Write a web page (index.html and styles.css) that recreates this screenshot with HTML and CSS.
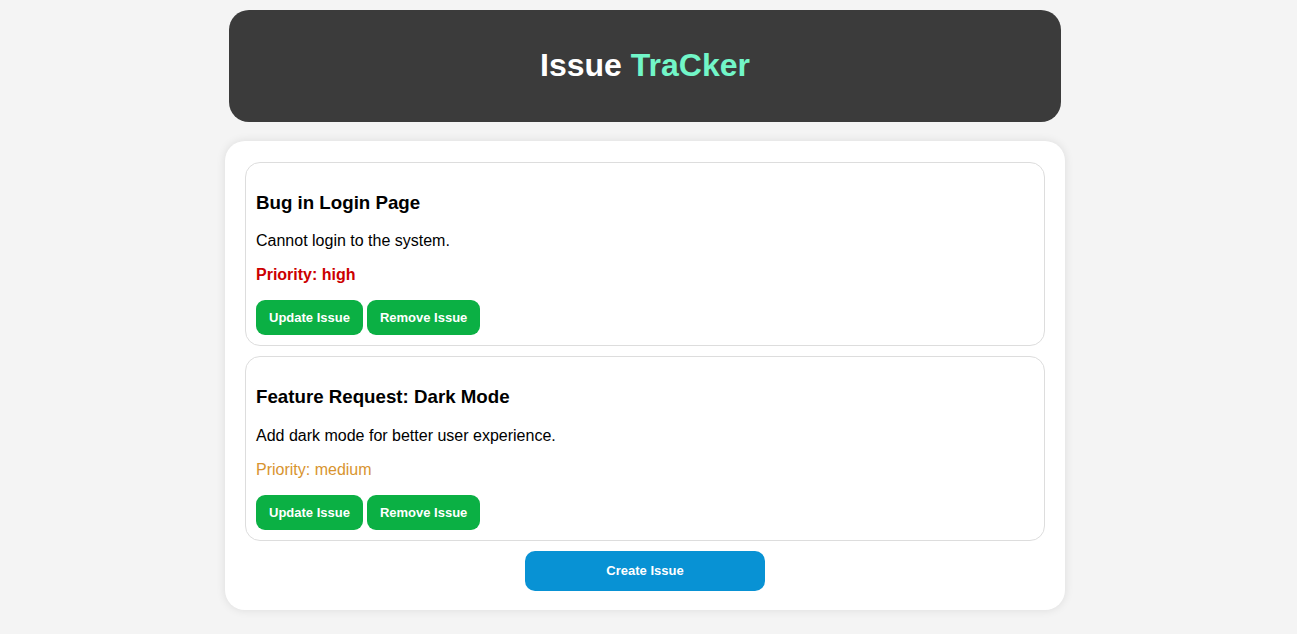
FILE: index.html
```html
<!DOCTYPE html>
<html lang="en">
<head>
<meta charset="utf-8">
<title>Issue Tracker</title>
<link rel="stylesheet" href="styles.css">
</head>
<body>
  <header class="app-header">
    <h1 class="app-title">Issue <span class="accent">TraCker</span></h1>
  </header>
  <main class="board">
    <div class="issue">
      <h3 class="issue-title">Bug in Login Page</h3>
      <p class="issue-desc">Cannot login to the system.</p>
      <p class="priority high">Priority: high</p>
      <div class="actions">
        <button class="btn">Update Issue</button>
        <button class="btn">Remove Issue</button>
      </div>
    </div>
    <div class="issue">
      <h3 class="issue-title">Feature Request: Dark Mode</h3>
      <p class="issue-desc">Add dark mode for better user experience.</p>
      <p class="priority medium">Priority: medium</p>
      <div class="actions">
        <button class="btn">Update Issue</button>
        <button class="btn">Remove Issue</button>
      </div>
    </div>
    <div class="create-row">
      <button class="create-btn">Create Issue</button>
    </div>
  </main>
</body>
</html>
```

FILE: styles.css
```css
* { box-sizing: border-box; }

html, body { margin: 0; }

body {
  background: #f4f4f4;
  font-family: "Liberation Sans", Arial, sans-serif;
  padding: 10px 7px 24px 0;
  color: #000;
}

.app-header {
  width: 832px;
  margin: 0 auto;
  padding: 16px;
  background: #3b3b3b;
  border-radius: 20px;
  text-align: center;
}

.app-title {
  margin: 21.44px 0;
  font-size: 32px;
  font-weight: bold;
  color: #ffffff;
  line-height: 37px;
}

.accent { color: #72f6c8; }

.board {
  width: 840px;
  margin: 19px auto 0;
  padding: 21px 20px 19px;
  background: #ffffff;
  border-radius: 20px;
  box-shadow: 0 0 10px rgba(0, 0, 0, 0.1);
  display: flex;
  flex-direction: column;
  gap: 10px;
}

.issue {
  border: 1px solid #dddddd;
  border-radius: 15px;
  padding: 10px;
}

.issue-title {
  margin: 18.72px 0;
  font-size: 18.72px;
  font-weight: bold;
}

.issue-desc {
  margin: 16px 0;
  font-size: 16px;
}

.priority {
  margin: 16px 0;
  font-size: 16px;
}

.priority.high { color: #cc0000; font-weight: bold; }
.priority.medium { color: #d8942f; }

.actions {
  display: flex;
  gap: 4px;
}

.btn {
  font-family: "Liberation Sans", Arial, sans-serif;
  font-size: 13px;
  font-weight: bold;
  color: #ffffff;
  background: #0bb044;
  border: none;
  border-radius: 9px;
  height: 35px;
  padding: 0 13px;
  cursor: pointer;
}

.create-row {
  display: flex;
  justify-content: center;
}

.create-btn {
  font-family: "Liberation Sans", Arial, sans-serif;
  font-size: 13px;
  font-weight: bold;
  color: #ffffff;
  background: #0892d4;
  border: none;
  border-radius: 10px;
  width: 240px;
  height: 40px;
  cursor: pointer;
}
```
